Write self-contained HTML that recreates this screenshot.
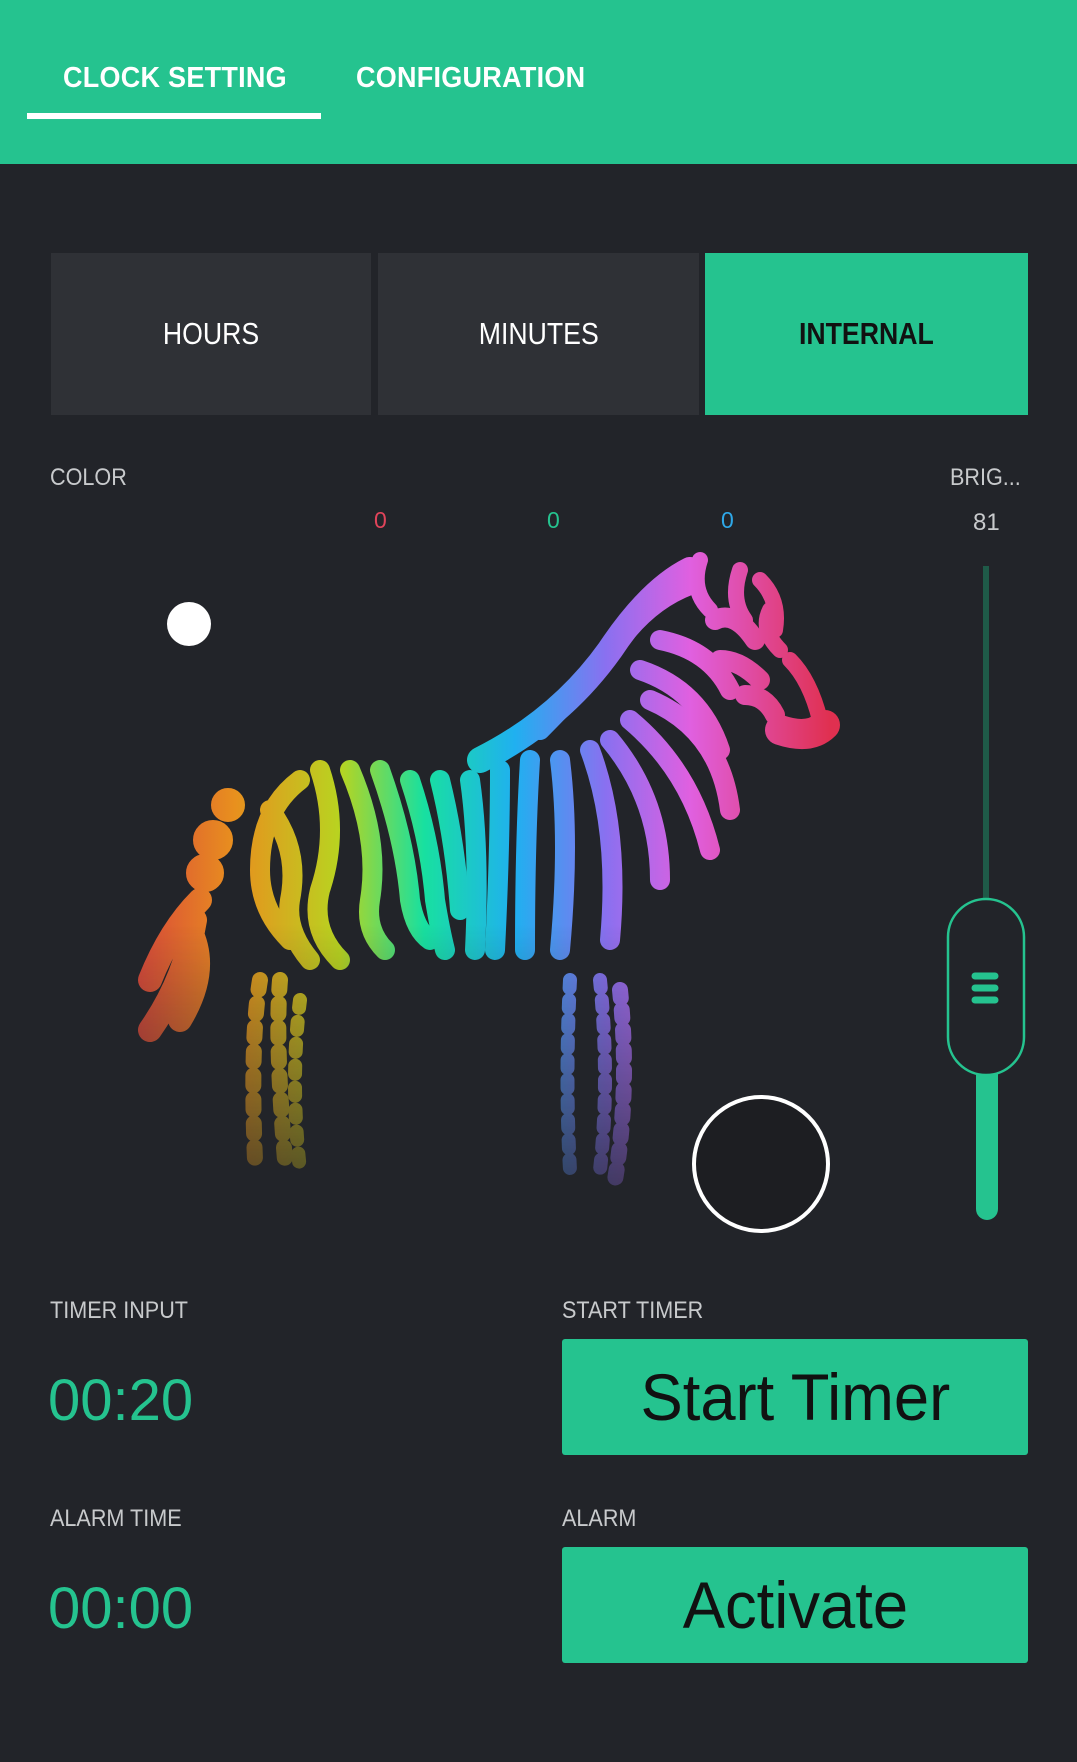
<!DOCTYPE html>
<html><head><meta charset="utf-8"><style>
*{margin:0;padding:0;box-sizing:border-box}
body{width:1077px;height:1762px;background:#222429;font-family:"Liberation Sans",sans-serif;position:relative;overflow:hidden;color:#fff}
.a{position:absolute}
.hdr{left:0;top:0;width:1077px;height:164px;background:#25c38f}
.tab{top:62px;font-size:29px;font-weight:bold;color:#fff;letter-spacing:0.3px;transform:scaleX(0.93);transform-origin:left}
.seg{top:253px;height:162px;background:#2f3136;color:#fff;font-size:31px;display:flex;align-items:center;justify-content:center}
.seg span{display:inline-block;transform:scaleX(0.86)}
.lbl{font-size:24px;color:#c8cacc;transform:scaleX(0.9);transform-origin:left}
.val{font-size:58px;color:#25c38f;font-weight:300}
.btn{background:#25c38f;color:#111;font-size:66px;display:flex;align-items:center;justify-content:center;border-radius:3px}
.btn span{display:inline-block;transform:scaleX(0.96)}
</style></head><body>
<div class="a hdr"></div>
<div class="a tab" style="left:63px">CLOCK SETTING</div>
<div class="a tab" style="left:356px">CONFIGURATION</div>
<div class="a" style="left:27px;top:113px;width:294px;height:6px;background:#fff"></div>

<div class="a seg" style="left:51px;width:320px"><span>HOURS</span></div>
<div class="a seg" style="left:378px;width:321px"><span>MINUTES</span></div>
<div class="a seg" style="left:705px;width:323px;background:#25c38f;color:#111;font-weight:bold"><span>INTERNAL</span></div>

<div class="a lbl" style="left:50px;top:464px">COLOR</div>
<div class="a lbl" style="left:950px;top:464px">BRIG...</div>
<div class="a" style="left:374px;top:507px;font-size:23px;color:#e0445a">0</div>
<div class="a" style="left:547px;top:507px;font-size:23px;color:#25c38f">0</div>
<div class="a" style="left:721px;top:507px;font-size:23px;color:#2ea8e8">0</div>
<div class="a" style="left:973px;top:509px;font-size:24px;color:#c8cacc">81</div>

<svg class="a" style="left:0;top:0" width="1077" height="1762">
<defs>
<linearGradient id="g" gradientUnits="userSpaceOnUse" x1="130" y1="0" x2="830" y2="0">
<stop offset="0" stop-color="#d9443c"/><stop offset="0.15" stop-color="#e8901e"/>
<stop offset="0.3" stop-color="#b8d420"/><stop offset="0.42" stop-color="#18e0a0"/>
<stop offset="0.55" stop-color="#20b0f0"/><stop offset="0.68" stop-color="#8a70f0"/>
<stop offset="0.8" stop-color="#e060e0"/><stop offset="1" stop-color="#e03050"/>
</linearGradient>
<linearGradient id="fade" x1="0" y1="0" x2="0" y2="1"><stop offset="0.55" stop-color="#fff"/><stop offset="1" stop-color="#fff" stop-opacity="0.15"/></linearGradient>
<mask id="m"><rect x="0" y="540" width="1077" height="700" fill="url(#fade)"/></mask>
</defs>
<g mask="url(#m)" stroke="url(#g)" fill="none" stroke-width="20" stroke-linecap="round">
<path d="M200 900 q-30 30 -50 80 M195 920 q-10 60 -45 110 M190 930 q20 40 -10 90" stroke-width="24"/>
<circle cx="228" cy="805" r="7" fill="url(#g)"/><circle cx="213" cy="840" r="10" fill="url(#g)"/><circle cx="205" cy="873" r="9" fill="url(#g)"/>
<path d="M300 780 q-40 30 -40 90 q0 40 30 70"/><path d="M270 810 q30 40 20 90 q-5 30 20 60"/>
<path d="M320 770 q20 60 0 120 q-10 40 20 70"/><path d="M350 770 q30 70 20 130 q-5 30 15 50"/>
<path d="M380 770 q25 70 30 130 q5 30 20 40"/><path d="M410 780 q20 60 25 120 q5 30 10 50"/>
<path d="M440 780 q15 60 20 130"/><path d="M470 780 q10 70 5 170"/><path d="M500 770 q0 80 -5 180"/>
<path d="M530 760 q-5 80 -5 190"/><path d="M560 760 q10 80 0 190"/><path d="M590 750 q30 80 20 190"/>
<path d="M610 740 q50 60 50 140"/><path d="M630 720 q60 50 80 130"/><path d="M650 700 q70 30 80 110"/>
<path d="M640 670 q60 20 80 80"/><path d="M660 640 q50 10 70 50"/>
<path d="M480 760 q80 -40 130 -110 q40 -60 80 -80" stroke-width="26"/>
<path d="M540 730 q50 -50 80 -90"/><path d="M620 640 q30 -40 70 -55"/>
<path d="M700 560 q-10 30 10 50 M740 570 q-10 30 5 50 M770 610 q-10 20 10 40 M760 580 q20 20 15 50 M790 660 q20 20 30 60" stroke-width="16"/>
<path d="M780 730 q30 10 45 -5" stroke-width="30"/>
<path d="M715 620 q20 -10 40 20 M720 660 q20 0 40 20 M745 695 q20 0 30 20"/>
<path d="M260 980 q-10 60 -5 180 M280 980 q-5 60 5 180" stroke-dasharray="10 14" stroke-width="16"/>
<path d="M300 1000 q-10 80 0 170" stroke-dasharray="8 14" stroke-width="14"/>
<path d="M570 980 q-5 100 0 190 M600 980 q10 100 0 190" stroke-dasharray="8 12" stroke-width="14"/>
<path d="M620 990 q10 100 -5 190" stroke-dasharray="8 12" stroke-width="16"/>
</g>
<circle cx="189" cy="624" r="22" fill="#fff"/>
<circle cx="761" cy="1164" r="67" fill="#1d1e22" stroke="#fff" stroke-width="4"/>
<rect x="983" y="566" width="6" height="340" fill="#1f5a48"/>
<rect x="976" y="1060" width="22" height="160" rx="11" fill="#25c38f"/>
<rect x="948" y="899" width="76" height="176" rx="38" fill="#222429" stroke="#25c38f" stroke-width="2.5"/>
<g stroke="#25c38f" stroke-width="7" stroke-linecap="round"><path d="M975 976h20M975 988h20M975 1000h20"/></g>
</svg>

<div class="a lbl" style="left:50px;top:1297px">TIMER INPUT</div>
<div class="a lbl" style="left:562px;top:1297px">START TIMER</div>
<div class="a val" style="left:48px;top:1367px">00:20</div>
<div class="a btn" style="left:562px;top:1339px;width:466px;height:116px"><span>Start Timer</span></div>
<div class="a lbl" style="left:50px;top:1505px">ALARM TIME</div>
<div class="a lbl" style="left:562px;top:1505px">ALARM</div>
<div class="a val" style="left:48px;top:1575px">00:00</div>
<div class="a btn" style="left:562px;top:1547px;width:466px;height:116px"><span>Activate</span></div>
</body></html>
